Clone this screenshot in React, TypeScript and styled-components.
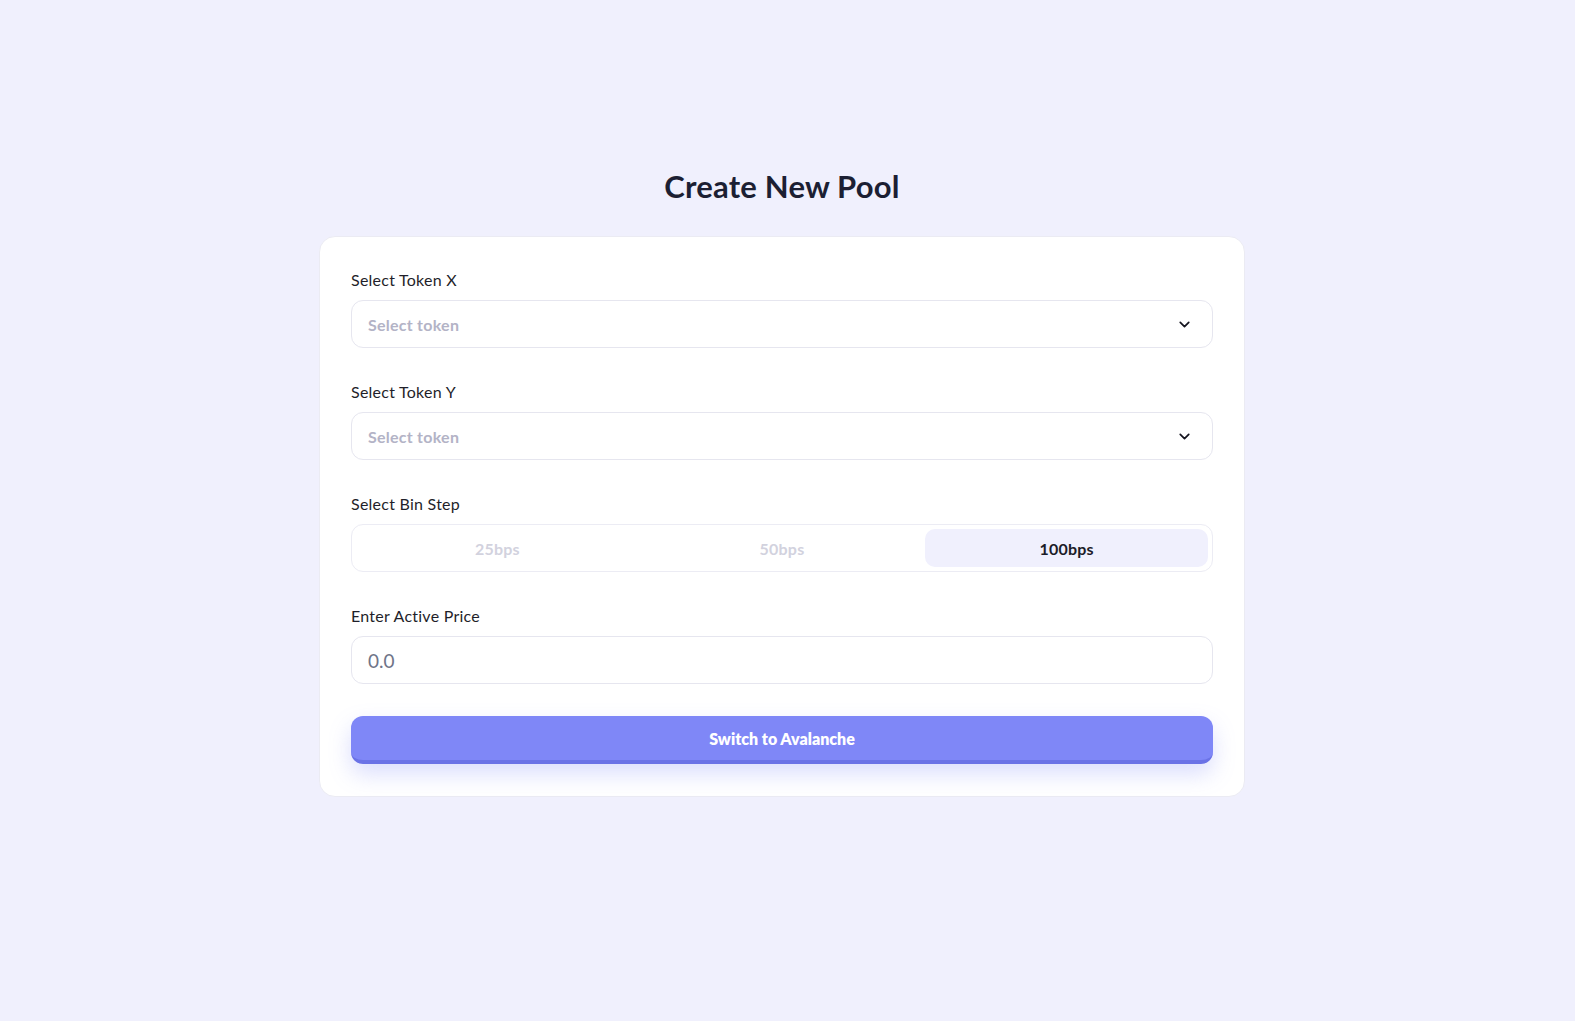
import React from "react";
import styled, { createGlobalStyle } from "styled-components";
import { ChevronDown } from "lucide-react";

const GlobalStyle = createGlobalStyle`
  html, body { margin: 0; padding: 0; background: #f0f0fd; }
  body { font-family: "Lato", "Open Sans", sans-serif; color: #1f1f2e; }
  * { box-sizing: border-box; }
`;

const Page = styled.main`
  min-height: 1021px;
  padding: 168px 11px 0 0;
  display: flex;
  flex-direction: column;
  align-items: center;
`;

const Title = styled.h1`
  margin: 0 0 32px;
  font-size: 31px;
  line-height: 36px;
  font-weight: 700;
  color: #1c1f33;
  letter-spacing: 0.2px;
`;

const Card = styled.section`
  width: 926px;
  background: #ffffff;
  border: 1px solid #ebebf3;
  border-radius: 16px;
  padding: 31px 31px 32px;
  display: flex;
  flex-direction: column;
  gap: 32px;
`;

const Field = styled.div`
  display: flex;
  flex-direction: column;
  gap: 8px;
`;

const Label = styled.label`
  font-size: 16px;
  line-height: 24px;
  color: #1f1f2a;
  letter-spacing: 0.25px;
`;

const SelectBox = styled.div`
  height: 48px;
  border: 1px solid #e6e6ef;
  border-radius: 12px;
  padding: 0 19px 0 16px;
  display: flex;
  align-items: center;
  justify-content: space-between;
  color: #14141f;
`;

const Placeholder = styled.span`
  font-size: 16px;
  font-weight: 700;
  color: #b3b3c6;
  letter-spacing: 0.25px;
`;

const Segmented = styled.div`
  height: 48px;
  border: 1px solid #ececf4;
  border-radius: 12px;
  padding: 4px;
  display: grid;
  grid-template-columns: repeat(3, 1fr);
  gap: 2px;
`;

const Segment = styled.button<{ $active?: boolean }>`
  border: none;
  border-radius: 10px;
  font-family: inherit;
  font-size: 16px;
  font-weight: 700;
  letter-spacing: 0.2px;
  background: ${(p) => (p.$active ? "#f0f0fd" : "transparent")};
  color: ${(p) => (p.$active ? "#1c1c28" : "#d2d2de")};
  cursor: pointer;
`;

const Input = styled.input`
  height: 48px;
  border: 1px solid #e6e6ef;
  border-radius: 12px;
  padding: 0 16px;
  font-family: inherit;
  font-size: 19px;
  color: #1f1f2a;
  outline: none;
  &::placeholder { color: #6f7488; }
`;

const Button = styled.button`
  height: 48px;
  border: none;
  border-radius: 12px;
  background: #7f87f7;
  border-bottom: 4px solid #6a72e6;
  box-shadow: 0 10px 22px rgba(127, 135, 247, 0.28);
  color: #ffffff;
  font-family: inherit;
  font-size: 16px;
  font-weight: 800;
  padding-top: 2px;
  cursor: pointer;
`;

export default function App() {
  return (
    <>
      <GlobalStyle />
      <Page>
        <Title>Create New Pool</Title>
        <Card>
          <Field>
            <Label>Select Token X</Label>
            <SelectBox>
              <Placeholder>Select token</Placeholder>
              <ChevronDown size={17} strokeWidth={2.4} />
            </SelectBox>
          </Field>
          <Field>
            <Label>Select Token Y</Label>
            <SelectBox>
              <Placeholder>Select token</Placeholder>
              <ChevronDown size={17} strokeWidth={2.4} />
            </SelectBox>
          </Field>
          <Field>
            <Label>Select Bin Step</Label>
            <Segmented>
              <Segment>25bps</Segment>
              <Segment>50bps</Segment>
              <Segment $active>100bps</Segment>
            </Segmented>
          </Field>
          <Field>
            <Label>Enter Active Price</Label>
            <Input placeholder="0.0" />
          </Field>
          <Button>Switch to Avalanche</Button>
        </Card>
      </Page>
    </>
  );
}
